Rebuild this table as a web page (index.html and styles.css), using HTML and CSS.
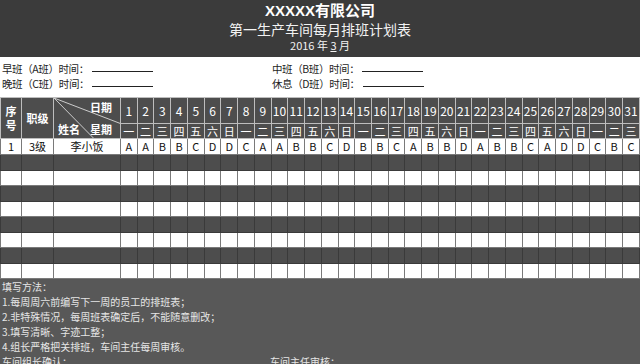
FILE: index.html
```html
<!DOCTYPE html>
<html lang="zh">
<head>
<meta charset="utf-8">
<title>第一生产车间每月排班计划表</title>
<link rel="stylesheet" href="styles.css">
</head>
<body>
<header class="title-block">
  <div class="company">XXXXX有限公司</div>
  <div class="subtitle">第一生产车间每月排班计划表</div>
  <div class="date">2016 年 <u>3</u> 月</div>
</header>
<section class="shifts">
  <div class="shift">早班（A班）时间：<span class="blank"></span></div>
  <div class="shift">中班（B班）时间：<span class="blank"></span></div>
  <div class="shift">晚班（C班）时间：<span class="blank"></span></div>
  <div class="shift">休息（D班）时间：<span class="blank"></span></div>
</section>
<table class="roster">
  <colgroup>
    <col class="c-no"><col class="c-level"><col class="c-name">
  </colgroup>
  <thead id="thead"></thead>
  <tbody id="tbody"></tbody>
</table>
<footer class="notes">
  <p>填写方法：</p>
  <p>1.每周周六前编写下一周的员工的排班表；</p>
  <p>2.非特殊情况，每周班表确定后，不能随意删改；</p>
  <p>3.填写清晰、字迹工整；</p>
  <p>4.组长严格把关排班，车间主任每周审核。</p>
  <div class="sign"><span>车间组长确认：</span><span>车间主任审核：</span></div>
</footer>
<script src="app.js"></script>
</body>
</html>
```
FILE: app.js
```js
const week = ['一','二','三','四','五','六','日'];
const shifts = 'AABBCDDCAABBCDBBCABBDABBCADDCBC'.split('');
const thead = document.getElementById('thead');
const tbody = document.getElementById('tbody');

let r1 = '<tr class="h1"><th rowspan="2" class="stack">序<br>号</th><th rowspan="2">职级</th>' +
  '<th rowspan="2" class="diag"><svg class="diag-lines" viewBox="0 0 67 41" preserveAspectRatio="none"><line x1="0" y1="0" x2="67" y2="26"/><line x1="0" y1="0" x2="40" y2="41"/></svg>' +
  '<div class="diag-in"><div class="d-top">日期</div><div class="d-bot"><span>姓名</span><span>星期</span></div></div></th>';
let r2 = '<tr class="h2">';
for (let d = 1; d <= 31; d++) {
  r1 += '<th class="num">' + d + '</th>';
  r2 += '<th class="wk">' + week[(d - 1) % 7] + '</th>';
}
thead.innerHTML = r1 + '</tr>' + r2 + '</tr>';

let rows = '<tr class="data"><td>1</td><td>3级</td><td>李小饭</td>' +
  shifts.map(s => '<td>' + s + '</td>').join('') + '</tr>';
for (let i = 0; i < 8; i++) {
  rows += '<tr class="' + (i % 2 === 0 ? 'dark' : 'light') + '">' + '<td></td>'.repeat(34) + '</tr>';
}
tbody.innerHTML = rows;
```
FILE: styles.css
```css
html, body {
  margin: 0;
  padding: 0;
}
body {
  width: 640px;
  height: 364px;
  overflow: hidden;
  background: #585858;
  font-family: "Noto Sans CJK SC", "Noto Sans", sans-serif;
}
.title-block {
  height: 57px;
  background: #3b3b3b;
  color: #fff;
  display: flex;
  flex-direction: column;
  align-items: center;
  box-sizing: border-box;
  padding-top: 1px;
}
.company {
  font-family: "Liberation Sans", "Noto Sans CJK SC", sans-serif;
  font-weight: 700;
  font-size: 15px;
  line-height: 20px;
}
.subtitle {
  font-size: 14px;
  line-height: 17px;
  color: #f2f2f2;
}
.date {
  font-size: 11px;
  line-height: 15px;
  color: #f2f2f2;
}
.shifts {
  height: 40px;
  background: #fff;
  box-sizing: border-box;
  padding: 4px 0 0 2px;
  display: grid;
  grid-template-columns: 270px 1fr;
  grid-auto-rows: 15px;
  font-size: 10.5px;
  letter-spacing: -0.4px;
  line-height: 15px;
  color: #1e1e1e;
}
.blank {
  display: inline-block;
  width: 61px;
  height: 10px;
  border-bottom: 1px solid #222;
  vertical-align: top;
  margin-left: 3px;
}
.roster {
  width: 640px;
  table-layout: fixed;
  border-collapse: collapse;
  font-size: 11px;
}
.c-no { width: 21px; }
.c-level { width: 32px; }
.c-name { width: 67px; }
.roster th, .roster td {
  border: 1px solid #7a7a7a;
  padding: 0;
  text-align: center;
  font-weight: 400;
  overflow: hidden;
  white-space: nowrap;
}
.roster thead th {
  background: #4d4d4d;
  color: #fff;
  border-color: #bdbdbd;
}
.h1 { height: 26px; }
.h2 { height: 15px; }
.num { font-size: 12px; }
.wk { font-size: 11px; line-height: 13px; }
.h1 th { font-weight: 700; line-height: 14px; }
.h1 th.num { font-weight: 400; }
.diag {
  position: relative;
  padding: 0;
}
.diag-lines {
  position: absolute;
  inset: 0;
  width: 100%;
  height: 100%;
}
.diag-lines line {
  stroke: #cfcfcf;
  stroke-width: 1;
}
.diag-in {
  height: 39px;
  display: flex;
  flex-direction: column;
  justify-content: space-between;
  padding: 1px 8px 1px 4px;
  box-sizing: border-box;
  font-weight: 700;
  line-height: 15px;
}
.d-top { text-align: right; }
.d-bot { display: flex; justify-content: space-between; }
.data { height: 16px; }
.data td { background: #fff; color: #111; line-height: 13px; }
.dark, .light { height: 15.5px; }
.dark td { background: #4d4d4d; border-color: #3a3a3a; }
.light td { background: #fff; border-color: #7a7a7a; }
.notes {
  padding-left: 2px;
  color: #e6e6e6;
  font-size: 10px;
  line-height: 15px;
}
.notes p { margin: 0; }
.sign {
  display: grid;
  grid-template-columns: 268px 1fr;
}
```
